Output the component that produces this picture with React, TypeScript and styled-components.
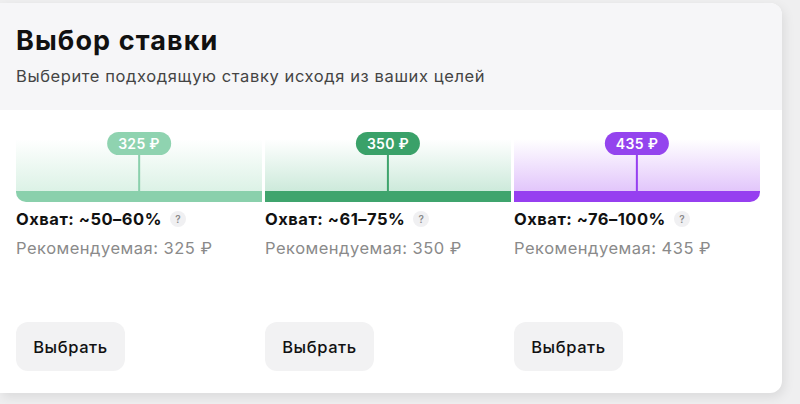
import * as React from 'react'
import styled, { createGlobalStyle } from 'styled-components'

interface IOption {
    price: number
    reach: string
    pill: string
    strip: string
    tint: string
}

const options: IOption[] = [
    { price: 325, reach: '~50–60%', pill: '#8fd3b0', strip: '#8ad0ac', tint: '#dcf2e6' },
    { price: 350, reach: '~61–75%', pill: '#3aa169', strip: '#3fa46d', tint: '#cdeadb' },
    { price: 435, reach: '~76–100%', pill: '#9444ee', strip: '#963ff0', tint: '#e2c6fb' },
]

const GlobalStyle = createGlobalStyle`
    html, body {
        margin: 0;
        padding: 0;
        background: #efeff0;
    }
    body {
        font-family: Inter, "Noto Sans", "Liberation Sans", sans-serif;
        -webkit-font-smoothing: antialiased;
    }
`

const Page = styled('div')`
    width: 800px;
    height: 404px;
    padding: 3px 18px 0 0;
    box-sizing: border-box;
    overflow: hidden;
`

const Card = styled('div')`
    display: flex;
    flex-flow: column nowrap;
    width: 782px;
    height: 390px;
    background: #fff;
    border-radius: 0 12px 12px 0;
    box-shadow: 2px 4px 12px rgba(0,0,0,.09);
    overflow: hidden;
`

const Header = styled('div')`
    display: flex;
    flex-flow: column nowrap;
    gap: 8px;
    height: 107px;
    padding: 22px 16px 0;
    box-sizing: border-box;
    background: #f6f6f8;
`

const Title = styled('h1')`
    margin: 0;
    font-size: 27px;
    line-height: 32px;
    font-weight: 700;
    color: #111;
    letter-spacing: 1.1px;
`

const Subtitle = styled('p')`
    margin: 0;
    font-size: 16.5px;
    line-height: 22px;
    color: #444;
    letter-spacing: 0.6px;
`

const Columns = styled('div')`
    display: grid;
    grid-template-columns: repeat(3, 246px);
    column-gap: 3px;
    flex: 1;
    padding: 22px 16px 22px;
`

const Column = styled('div')`
    display: flex;
    flex-flow: column nowrap;
`

const Scale = styled('div')<{ $tint: string; $strip: string; $first: boolean; $last: boolean }>`
    position: relative;
    height: 70px;
    box-sizing: border-box;
    background: linear-gradient(to bottom, #fff 12%, ${p => p.$tint} 100%);
    border-bottom: 11px solid ${p => p.$strip};
    border-radius: ${p => p.$first ? '0 0 0 10px' : p.$last ? '0 0 10px 0' : '0'};
`

const Marker = styled('div')`
    position: absolute;
    left: 50%;
    top: 0;
    bottom: 0;
    display: flex;
    flex-flow: column nowrap;
    align-items: center;
    transform: translateX(-50%);
`

const Pill = styled('div')<{ $color: string }>`
    padding: 0 11px;
    height: 23px;
    line-height: 23px;
    border-radius: 12px;
    background: ${p => p.$color};
    color: #fff;
    font-size: 14px;
    font-weight: 600;
    letter-spacing: 0.3px;
    white-space: nowrap;
`

const Stem = styled('div')<{ $color: string }>`
    flex: 1;
    width: 2px;
    background: ${p => p.$color};
`

const Reach = styled('div')`
    display: flex;
    align-items: center;
    gap: 8px;
    margin-top: 6px;
    font-size: 16.5px;
    line-height: 22px;
    font-weight: 700;
    color: #111;
    letter-spacing: 0.5px;
`

const Hint = styled('span')`
    display: inline-flex;
    justify-content: center;
    align-items: center;
    width: 16px;
    height: 16px;
    border-radius: 50%;
    background: #f0f0f2;
    color: #8a8a8a;
    font-size: 10px;
    font-weight: 600;
    letter-spacing: 0;
`

const Recommended = styled('div')`
    margin-top: 7px;
    font-size: 16.5px;
    line-height: 22px;
    color: #8a8a8a;
    letter-spacing: 0.5px;
`

const SelectButton = styled('button')`
    align-self: flex-start;
    margin-top: auto;
    width: 109px;
    height: 49px;
    padding: 0;
    border: none;
    border-radius: 12px;
    background: #f2f2f3;
    color: #111;
    font-family: inherit;
    font-size: 16.5px;
    font-weight: 500;
    letter-spacing: 0.6px;
    cursor: pointer;
`

class App extends React.Component {
    public render(): JSX.Element {
        return (
            <Page>
                <GlobalStyle />
                <Card>
                    <Header>
                        <Title>Выбор ставки</Title>
                        <Subtitle>Выберите подходящую ставку исходя из ваших целей</Subtitle>
                    </Header>
                    <Columns>
                        {options.map((o, i) => (
                            <Column key={o.price}>
                                <Scale $tint={o.tint} $strip={o.strip} $first={i === 0} $last={i === options.length - 1}>
                                    <Marker>
                                        <Pill $color={o.pill}>{o.price} ₽</Pill>
                                        <Stem $color={o.strip} />
                                    </Marker>
                                </Scale>
                                <Reach>Охват: {o.reach}<Hint>?</Hint></Reach>
                                <Recommended>Рекомендуемая: {o.price} ₽</Recommended>
                                <SelectButton>Выбрать</SelectButton>
                            </Column>
                        ))}
                    </Columns>
                </Card>
            </Page>
        )
    }
}

export default App
